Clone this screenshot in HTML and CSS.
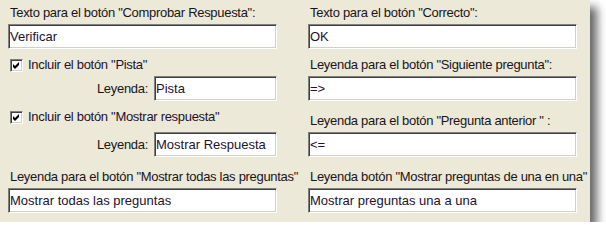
FILE: index.html
```html
<!DOCTYPE html>
<html lang="es">
<head>
<meta charset="utf-8">
<title>Opciones de botones</title>
<link rel="stylesheet" href="styles.css">
</head>
<body>
<div class="panel">
  <div class="lbl">Texto para el botón "Comprobar Respuesta":</div>
  <div class="lbl">Texto para el botón "Correcto":</div>
  <div class="field"><span class="input">Verificar</span></div>
  <div class="field"><span class="input">OK</span></div>

  <div class="check-row"><span class="cb"><svg width="7" height="7" viewBox="0 0 7 7"><polygon points="0,2 2,4 6,0 6,3 2,7 0,5" fill="#000"/></svg></span><span>Incluir el botón "Pista"</span></div>
  <div class="lbl">Leyenda para el botón "Siguiente pregunta":</div>
  <div class="leyenda"><span>Leyenda:</span><span class="input small">Pista</span></div>
  <div class="field"><span class="input">=&gt;</span></div>

  <div class="check-row"><span class="cb"><svg width="7" height="7" viewBox="0 0 7 7"><polygon points="0,2 2,4 6,0 6,3 2,7 0,5" fill="#000"/></svg></span><span>Incluir el botón "Mostrar respuesta"</span></div>
  <div class="lbl">Leyenda para el botón "Pregunta anterior " :</div>
  <div class="leyenda"><span>Leyenda:</span><span class="input small">Mostrar Respuesta</span></div>
  <div class="field"><span class="input">&lt;=</span></div>

  <div class="lbl">Leyenda para el botón "Mostrar todas las preguntas"</div>
  <div class="lbl">Leyenda botón "Mostrar preguntas de una en una"</div>
  <div class="field"><span class="input">Mostrar todas las preguntas</span></div>
  <div class="field"><span class="input">Mostrar preguntas una a una</span></div>
</div>
</body>
</html>
```
FILE: styles.css
```css
html, body {
  margin: 0;
  padding: 0;
  background: #ffffff;
}

.panel {
  width: 582px;
  height: 222px;
  padding-left: 8px;
  background: #ECE9D8;
  box-shadow: 7px 7px 9px rgba(0, 0, 0, 0.6);
  display: grid;
  grid-template-columns: 269px 269px;
  column-gap: 31px;
  grid-template-rows: 24px 25px 27px 25px 31px 25px 31px 25px;
  font-family: "Liberation Sans", Arial, sans-serif;
  font-size: 13px;
  line-height: 16px;
  letter-spacing: -0.3px;
  color: #1a1418;
}

.lbl {
  display: flex;
  align-items: flex-end;
  padding-bottom: 3px;
  padding-left: 2px;
  white-space: nowrap;
}

.field {
  display: flex;
}

.input {
  box-sizing: border-box;
  width: 269px;
  height: 25px;
  display: flex;
  align-items: center;
  padding: 0 1px;
  background: #ffffff;
  border-top: 1px solid #808080;
  border-left: 1px solid #808080;
  border-right: 1px solid #ffffff;
  border-bottom: 1px solid #ffffff;
  box-shadow: inset 1px 1px 0 #404040, inset -1px -1px 0 #D4D0C8;
  color: #24102e;
  letter-spacing: 0;
  white-space: nowrap;
  overflow: hidden;
}

.input.small {
  width: 123px;
}

.check-row {
  display: flex;
  align-items: center;
  align-self: start;
  padding-top: 8px;
  padding-left: 2px;
  gap: 5px;
  color: #24102e;
  white-space: nowrap;
}

.cb {
  box-sizing: border-box;
  width: 13px;
  height: 13px;
  background: #ffffff;
  border-top: 1px solid #808080;
  border-left: 1px solid #808080;
  border-right: 1px solid #ffffff;
  border-bottom: 1px solid #ffffff;
  box-shadow: inset 1px 1px 0 #404040, inset -1px -1px 0 #D4D0C8;
  display: flex;
  align-items: center;
  justify-content: center;
}

.cb svg {
  display: block;
}

.leyenda {
  display: flex;
  align-items: center;
  justify-content: flex-end;
  gap: 6px;
}
```
